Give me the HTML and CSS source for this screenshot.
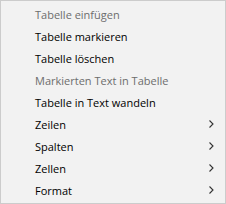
FILE: index.html
```html
<!DOCTYPE html>
<html>
<head>
<meta charset="utf-8">
<link rel="stylesheet" href="styles.css">
</head>
<body>
<ul class="menu">
  <li class="item disabled"><span class="label">Tabelle einfügen</span></li>
  <li class="item"><span class="label">Tabelle markieren</span></li>
  <li class="item"><span class="label">Tabelle löschen</span></li>
  <li class="item disabled"><span class="label">Markierten Text in Tabelle</span></li>
  <li class="item"><span class="label">Tabelle in Text wandeln</span></li>
  <li class="item"><span class="label">Zeilen</span><svg class="chev" width="5" height="8" viewBox="0 0 5 8"><path d="M0.5 0.5 L4 4 L0.5 7.5" fill="none" stroke="#333" stroke-width="1.1"/></svg></li>
  <li class="item"><span class="label">Spalten</span><svg class="chev" width="5" height="8" viewBox="0 0 5 8"><path d="M0.5 0.5 L4 4 L0.5 7.5" fill="none" stroke="#333" stroke-width="1.1"/></svg></li>
  <li class="item"><span class="label">Zellen</span><svg class="chev" width="5" height="8" viewBox="0 0 5 8"><path d="M0.5 0.5 L4 4 L0.5 7.5" fill="none" stroke="#333" stroke-width="1.1"/></svg></li>
  <li class="item"><span class="label">Format</span><svg class="chev" width="5" height="8" viewBox="0 0 5 8"><path d="M0.5 0.5 L4 4 L0.5 7.5" fill="none" stroke="#333" stroke-width="1.1"/></svg></li>
</ul>
</body>
</html>
```
FILE: styles.css
```css
html, body {
  margin: 0;
  padding: 0;
  background: #f2f2f2;
}
.menu {
  list-style: none;
  margin: 0;
  box-sizing: border-box;
  width: 226px;
  height: 204px;
  padding: 2px 0 2px 0;
  border: 1px solid #cccccc;
  background: #f2f2f2;
  font-family: "Open Sans", "Noto Sans", sans-serif;
  font-size: 11px;
  color: #000;
}
.item {
  display: flex;
  align-items: center;
  height: 22px;
  padding-left: 34px;
  padding-right: 11px;
}
.label {
  flex: 1;
  white-space: nowrap;
}
.disabled {
  color: #6d6d6d;
}
.chev {
  display: block;
}
```
